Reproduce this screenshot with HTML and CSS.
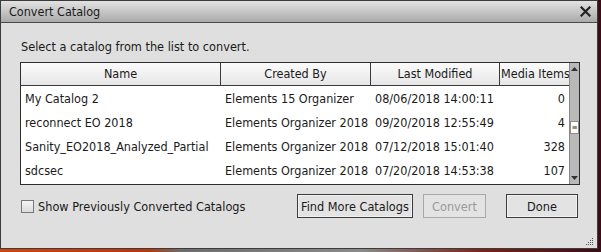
FILE: index.html
```html
<!DOCTYPE html>
<html lang="en">
<head>
    <meta charset="UTF-8">
    <title>Convert Catalog</title>
    <link rel="stylesheet" href="styles.css">
</head>
<body>
    <div class="dialog">
        <div class="titlebar">
            <span class="title">Convert Catalog</span>
            <svg class="close" width="11" height="11" viewBox="0 0 11 11">
                <path d="M1.5 1.5 L9.5 9.5 M9.5 1.5 L1.5 9.5" stroke="#222" stroke-width="2.2" stroke-linecap="square"/>
            </svg>
        </div>
        <div class="content">
            <p class="intro">Select a catalog from the list to convert.</p>
            <div class="list">
                <div class="grid">
                    <div class="head">Name</div>
                    <div class="head">Created By</div>
                    <div class="head">Last Modified</div>
                    <div class="head last">Media Items</div>

                    <div class="cell">My Catalog 2</div>
                    <div class="cell">Elements 15 Organizer</div>
                    <div class="cell">08/06/2018 14:00:11</div>
                    <div class="cell num">0</div>

                    <div class="cell">reconnect EO 2018</div>
                    <div class="cell">Elements Organizer 2018</div>
                    <div class="cell">09/20/2018 12:55:49</div>
                    <div class="cell num">4</div>

                    <div class="cell">Sanity_EO2018_Analyzed_Partial</div>
                    <div class="cell">Elements Organizer 2018</div>
                    <div class="cell">07/12/2018 15:01:40</div>
                    <div class="cell num">328</div>

                    <div class="cell">sdcsec</div>
                    <div class="cell">Elements Organizer 2018</div>
                    <div class="cell">07/20/2018 14:53:38</div>
                    <div class="cell num">107</div>
                </div>
                <div class="scrollbar">
                    <div class="arrow">
                        <svg width="7" height="4" viewBox="0 0 7 4"><path d="M0 4 L3.5 0 L7 4 Z" fill="#333"/></svg>
                    </div>
                    <div class="track">
                        <div class="thumb">≡</div>
                    </div>
                    <div class="arrow">
                        <svg width="7" height="4" viewBox="0 0 7 4"><path d="M0 0 L3.5 4 L7 0 Z" fill="#333"/></svg>
                    </div>
                </div>
            </div>
            <div class="footer">
                <label class="check">
                    <span class="box"></span>
                    Show Previously Converted Catalogs
                </label>
                <div class="buttons">
                    <button class="btn find">Find More Catalogs</button>
                    <button class="btn convert" disabled>Convert</button>
                    <button class="btn done">Done</button>
                </div>
            </div>
        </div>
        <div class="grip">
            <svg width="8" height="8" viewBox="0 0 8 8" fill="#555">
                <rect x="6" y="0" width="1" height="1"/>
                <rect x="4" y="2" width="1" height="1"/><rect x="6" y="2" width="1" height="1"/>
                <rect x="2" y="4" width="1" height="1"/><rect x="4" y="4" width="1" height="1"/><rect x="6" y="4" width="1" height="1"/>
                <rect x="0" y="6" width="1" height="1"/><rect x="2" y="6" width="1" height="1"/><rect x="4" y="6" width="1" height="1"/><rect x="6" y="6" width="1" height="1"/>
            </svg>
        </div>
    </div>
</body>
</html>
```

FILE: styles.css
```css
body {
    margin: 0;
    width: 601px;
    height: 252px;
    overflow: hidden;
    background: linear-gradient(90deg, #c8480e 0%, #b23a10 25%, #6c6c6c 30%, #8a8a8a 60%, #7a2418 80%, #3a0c18 100%);
    font-family: "DejaVu Sans Condensed", "DejaVu Sans", sans-serif;
    font-size: 12.5px;
    color: #1a1a1a;
}
.dialog {
    position: relative;
    width: 598px;
    height: 249px;
    box-sizing: border-box;
    border: 1px solid #3c3c3c;
    background: #dfdfdf;
}
.titlebar {
    height: 21px;
    border-bottom: 1px solid #4a4a4a;
    background: linear-gradient(#e2e2e2, #aaaaaa);
    display: flex;
    align-items: center;
    justify-content: space-between;
    padding: 0 6px 0 8px;
}
.title {
    font-size: 12.5px;
}
.content {
    padding: 0 17px 0 19px;
}
.intro {
    margin: 16px 0 0 1px;
    font-size: 12.6px;
    line-height: 15px;
}
.list {
    display: flex;
    margin-top: 8px;
    width: 560px;
    height: 123px;
    box-sizing: border-box;
    border: 1px solid #2e2e2e;
    background: #fff;
}
.grid {
    display: grid;
    grid-template-columns: 200px 150px 129px 69px;
    grid-auto-rows: 24px;
    align-content: start;
}
.head {
    height: 22px;
    line-height: 22px;
    text-align: center;
    background: linear-gradient(#fbfbfb, #e6e6e6);
    border-right: 1px solid #3a3a3a;
    border-bottom: 1px solid #3a3a3a;
    white-space: nowrap;
    overflow: hidden;
}
.head.last {
    border-right: none;
    text-align: left;
    padding-left: 1px;
}
.cell {
    line-height: 24px;
    padding-left: 4px;
    white-space: nowrap;
}
.cell.num {
    text-align: right;
    padding: 0 4px 0 0;
}
.scrollbar {
    width: 10px;
    border-left: 1px solid #8a8a8a;
    background: #b9b9b9;
    display: flex;
    flex-direction: column;
}
.arrow {
    height: 12px;
    display: flex;
    align-items: center;
    justify-content: center;
}
.track {
    flex: 1;
    display: flex;
    flex-direction: column;
    justify-content: center;
}
.thumb {
    height: 11px;
    margin-top: 8px;
    background: #fdfdfd;
    border: 1px solid #8c8c8c;
    font-size: 8px;
    line-height: 11px;
    text-align: center;
    color: #333;
}
.footer {
    display: flex;
    justify-content: space-between;
    align-items: center;
    margin-top: 9px;
}
.check {
    display: flex;
    align-items: center;
    gap: 4px;
    margin-left: 1px;
    font-size: 12.6px;
}
.box {
    width: 11px;
    height: 11px;
    border: 1px solid #777;
    background: linear-gradient(#f4f4f4, #dcdcdc);
}
.buttons {
    display: flex;
    gap: 10px;
    margin-right: 2px;
}
.btn {
    height: 24px;
    font-family: inherit;
    font-size: 12.6px;
    color: #1a1a1a;
    background: #e3e3e3;
    border: 1px solid #3c3c3c;
    box-shadow: inset 0 0 0 1px #f2f2f2;
    padding: 0;
}
.find {
    width: 116px;
}
.convert {
    width: 63px;
    color: #9a9a9a;
    border-color: #a8a8a8;
    box-shadow: none;
    margin-right: 10px;
}
.done {
    width: 72px;
}
.grip {
    position: absolute;
    right: 3px;
    bottom: 2px;
    display: flex;
}
```
